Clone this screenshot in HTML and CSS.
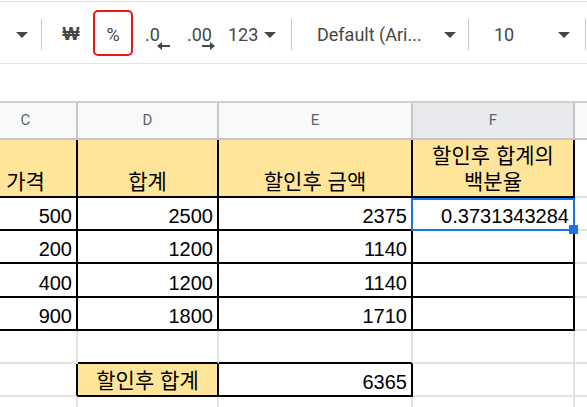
FILE: index.html
```html
<!DOCTYPE html>
<html lang="ko">
<head>
    <meta charset="UTF-8">
    <title>Sheet</title>
    <link rel="stylesheet" href="styles.css">
</head>
<body>
    <div class="toolbar">
        <span class="tool tool-menu"><span class="caret"></span></span>
        <span class="divider div-1"></span>
        <span class="tool won">₩</span>
        <span class="tool percent">%</span>
        <span class="tool dec dec-less">
            <span class="dec-text">.0</span>
            <svg width="13" height="8" viewBox="0 0 13 8"><path d="M13 3H5V0L0 4l5 4V5h8z" fill="#444746"/></svg>
        </span>
        <span class="tool dec dec-more">
            <span class="dec-text">.00</span>
            <svg width="13" height="8" viewBox="0 0 13 8"><path d="M0 3h8V0l5 4-5 4V5H0z" fill="#444746"/></svg>
        </span>
        <span class="tool formats">123<span class="caret"></span></span>
        <span class="divider div-2"></span>
        <span class="tool font-pick">Default (Ari...<span class="caret"></span></span>
        <span class="divider div-3"></span>
        <span class="tool size-pick">10<span class="caret"></span></span>
        <span class="divider div-4"></span>
    </div>

    <div class="sheet-view">
        <div class="sheet">
            <!-- column letters -->
            <div class="cell col-head">C</div>
            <div class="cell col-head">D</div>
            <div class="cell col-head">E</div>
            <div class="cell col-head active">F</div>
            <div class="cell col-head"></div>

            <!-- header row -->
            <div class="cell label edge-r edge-b">가격</div>
            <div class="cell label edge-r edge-b">합계</div>
            <div class="cell label edge-r edge-b">할인후 금액</div>
            <div class="cell label edge-r edge-b">할인후 합계의<br>백분율</div>
            <div class="cell"></div>

            <div class="cell num edge-r edge-b">500</div>
            <div class="cell num edge-r edge-b">2500</div>
            <div class="cell num edge-r edge-b">2375</div>
            <div class="cell num edge-r edge-b current">0.3731343284<span class="selection"></span><span class="handle"></span></div>
            <div class="cell"></div>

            <div class="cell num edge-r edge-b">200</div>
            <div class="cell num edge-r edge-b">1200</div>
            <div class="cell num edge-r edge-b">1140</div>
            <div class="cell edge-r edge-b"></div>
            <div class="cell"></div>

            <div class="cell num edge-r edge-b">400</div>
            <div class="cell num edge-r edge-b">1200</div>
            <div class="cell num edge-r edge-b">1140</div>
            <div class="cell edge-r edge-b"></div>
            <div class="cell"></div>

            <div class="cell num edge-r edge-b">900</div>
            <div class="cell num edge-r edge-b">1800</div>
            <div class="cell num edge-r edge-b">1710</div>
            <div class="cell edge-r edge-b"></div>
            <div class="cell"></div>

            <div class="cell"></div>
            <div class="cell edge-b"></div>
            <div class="cell edge-b"></div>
            <div class="cell"></div>
            <div class="cell"></div>

            <div class="cell edge-r"></div>
            <div class="cell label edge-r edge-b">할인후 합계</div>
            <div class="cell num edge-r edge-b">6365</div>
            <div class="cell"></div>
            <div class="cell"></div>

            <div class="cell"></div>
            <div class="cell"></div>
            <div class="cell"></div>
            <div class="cell"></div>
            <div class="cell"></div>
        </div>
    </div>
</body>
</html>
```

FILE: styles.css
```css
body {
    margin: 0;
    overflow: hidden;
    background: #fff;
    font-family: "Liberation Sans", "Noto Sans CJK KR", sans-serif;
}

/* toolbar */

.toolbar {
    display: flex;
    align-items: center;
    height: 61px;
    margin-top: 1px;
    border-top: 1px solid #e1e3e1;
    border-bottom: 1px solid #e1e3e1;
    font-family: Roboto, sans-serif;
    font-size: 18px;
    color: #444746;
    white-space: nowrap;
    overflow: hidden;
}

.tool {
    display: flex;
    align-items: center;
    padding-top: 4px;
    box-sizing: border-box;
}

.caret {
    width: 0;
    height: 0;
    border-left: 6px solid transparent;
    border-right: 6px solid transparent;
    border-top: 6px solid #444746;
}

.divider {
    flex-shrink: 0;
    width: 1px;
    height: 31px;
    margin-top: 3px;
    background: #c7c7c7;
}

.div-1 { margin-left: 7px; }
.div-2 { margin-left: 15px; }
.div-3 { margin-left: 12px; }
.div-4 { margin-left: 15px; }

.tool-menu {
    margin-left: 10px;
    width: 24px;
    justify-content: center;
}

.won {
    margin-left: 9px;
    width: 40px;
    justify-content: center;
    font-family: "Liberation Sans", "DejaVu Sans", sans-serif;
    font-weight: bold;
}

.percent {
    margin-left: 2px;
    width: 40px;
    height: 46px;
    justify-content: center;
    border: 2px solid #e8190f;
    border-radius: 5px;
}

.dec {
    flex-direction: column;
    align-items: flex-start;
    padding-top: 12px;
    padding-left: 8px;
}

.dec-text {
    line-height: 18px;
}

.dec svg {
    display: block;
    margin-top: -2px;
    margin-bottom: 2px;
}

.dec-less { margin-left: 4px; width: 34px; }
.dec-less svg { margin-left: 12px; }
.dec-more { margin-left: 8px; width: 42px; }
.dec-more svg { margin-left: 15px; }

.formats {
    margin-left: 7px;
    width: 48px;
    justify-content: space-between;
}

.font-pick {
    margin-left: 25px;
    width: 139px;
    justify-content: space-between;
}

.size-pick {
    margin-left: 25px;
    width: 76px;
    justify-content: space-between;
}

/* grid */

.sheet-view {
    height: 343px;
    overflow: hidden;
}

.sheet {
    display: grid;
    grid-template-columns: 103px 141px 194px 162px 80px;
    grid-template-rows: 37px 58px 33px 33px 34px 33px 33px 33px 33px;
    margin: 37px 0 0 -25px;
    border-top: 2px solid #d0d0d0;
}

.cell {
    box-sizing: border-box;
    display: flex;
    align-items: flex-end;
    padding: 0 4px 1px;
    border-right: 2px solid #e2e2e2;
    border-bottom: 2px solid #e2e2e2;
    font-size: 20px;
    line-height: 23px;
    color: #000;
    white-space: nowrap;
}

.col-head {
    align-items: center;
    justify-content: center;
    padding: 0;
    background: #f8f9fa;
    border-color: #c4c7c5;
    font-family: Roboto, sans-serif;
    font-size: 15px;
    color: #5f6368;
}

.col-head.active {
    background: #e8eaed;
}

.label {
    justify-content: center;
    text-align: center;
    font-size: 21px;
    line-height: 26px;
    background: #ffe599;
}

.num {
    justify-content: flex-end;
}

.edge-r { border-right-color: #000; }
.edge-b { border-bottom-color: #000; }

.current {
    position: relative;
}

.selection {
    position: absolute;
    left: -2px;
    top: 0;
    right: -2px;
    bottom: -2px;
    border: 2px solid #1a73e8;
}

.handle {
    position: absolute;
    right: -5px;
    bottom: -5px;
    width: 9px;
    height: 9px;
    background: #1a73e8;
}
```
